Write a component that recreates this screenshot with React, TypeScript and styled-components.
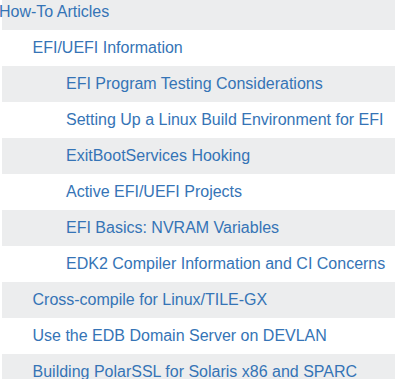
import styled, { createGlobalStyle } from 'styled-components';

const GlobalStyle = createGlobalStyle`
    html, body {
        margin: 0;
        padding: 0;
        background: #ffffff;
        overflow: hidden;
    }
`;

interface Item {
    title: string,
    level: number
}

const items: Item[] = [
    { title: 'How-To Articles', level: 0 },
    { title: 'EFI/UEFI Information', level: 1 },
    { title: 'EFI Program Testing Considerations', level: 2 },
    { title: 'Setting Up a Linux Build Environment for EFI', level: 2 },
    { title: 'ExitBootServices Hooking', level: 2 },
    { title: 'Active EFI/UEFI Projects', level: 2 },
    { title: 'EFI Basics: NVRAM Variables', level: 2 },
    { title: 'EDK2 Compiler Information and CI Concerns', level: 2 },
    { title: 'Cross-compile for Linux/TILE-GX', level: 1 },
    { title: 'Use the EDB Domain Server on DEVLAN', level: 1 },
    { title: 'Building PolarSSL for Solaris x86 and SPARC', level: 1 },
];

function App() {
    return (
        <>
            <GlobalStyle />
            <Tree>
                {items.map((item, i) => (
                    <Row key={i} $striped={i % 2 === 0}>
                        <Link href="#" $level={item.level}>{item.title}</Link>
                    </Row>
                ))}
            </Tree>
        </>
    );
}

export default App;



const Tree = styled.ul`
    list-style: none;
    margin: -6px 0 0 2px;
    padding: 0;
    display: flex;
    flex-direction: column;
`;

const Row = styled.li<{ $striped: boolean }>`
    height: 36px;
    display: flex;
    align-items: center;
    white-space: nowrap;
    background: ${({ $striped }) => $striped ? '#ecedee' : '#ffffff'};
`;

const Link = styled.a<{ $level: number }>`
    margin-left: ${({ $level }) => $level * 33.5 - 3}px;
    font-family: 'Liberation Sans', Arial, sans-serif;
    font-size: 16px;
    line-height: 18px;
    color: #3574b6;
    text-decoration: none;
`;
